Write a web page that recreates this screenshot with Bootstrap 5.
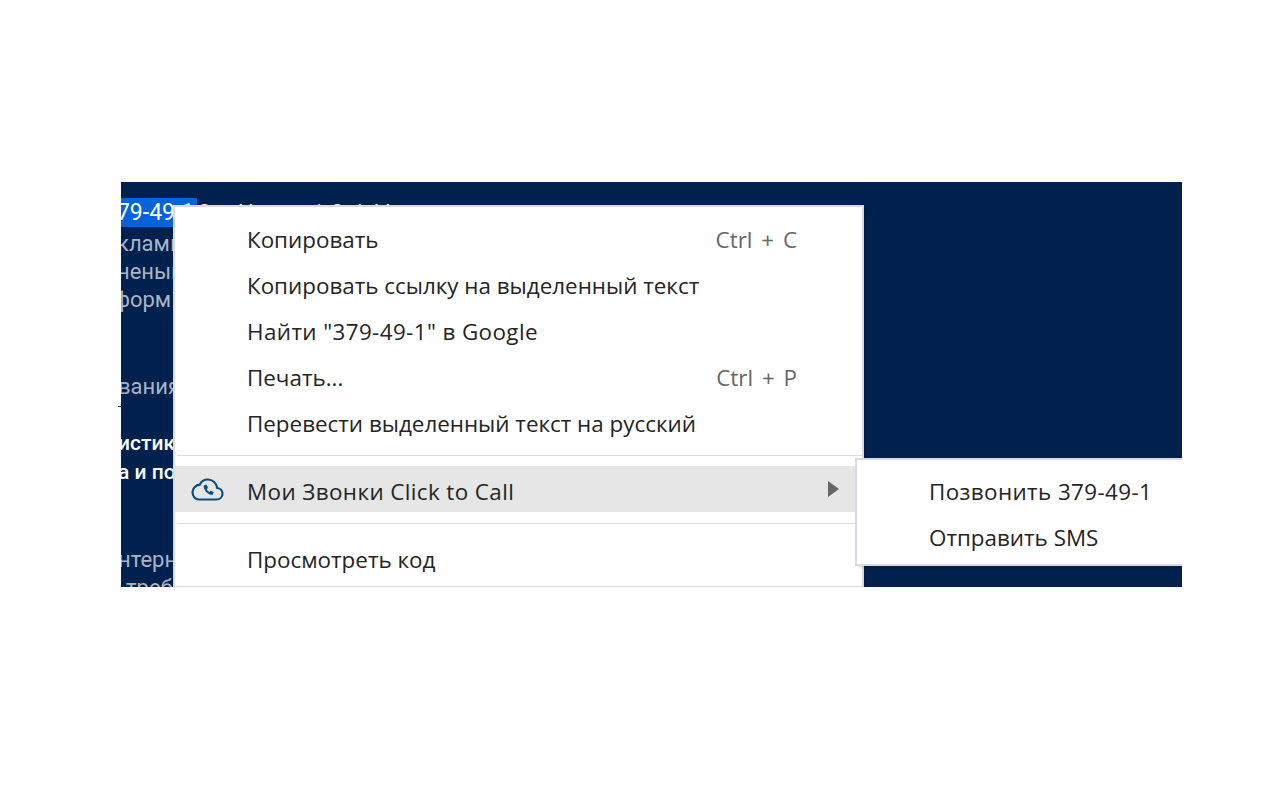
<!DOCTYPE html>
<html lang="en">
<head>
<meta charset="UTF-8">
<title>Мои Звонки Click to Call</title>
<link href="https://cdn.jsdelivr.net/npm/bootstrap@5.3.0/dist/css/bootstrap.min.css" rel="stylesheet">
<style>
  body { background: #fff; overflow: hidden; }
  .stage { width: 1061px; height: 405px; margin: 182px 0 0 121px; background: #00214d; overflow: hidden; position: relative; font-family: Roboto, sans-serif; font-size: 22px; color: #a9b4c6; }
  .bg-line { position: absolute; white-space: nowrap; line-height: 29px; }
  .bg-white-line { color: #fff; font-weight: 500; font-size: 21px; }
  .sel { background: #0563d9; color: #fff; font-size: 23px; padding: 1px 3px 1px 0; }
  .sel-rest { color: #fff; margin-left: 1px; }
  .ctx { position: absolute; background: #fff; font-family: "Open Sans", sans-serif; font-size: 22.4px; color: #242424; white-space: nowrap; box-shadow: 0 0 0 2px #d9dbe0, 2px 2px 4px rgba(0,0,0,.35); }
  .ctx-main { left: 54px; top: 25px; width: 687px; height: 379px; padding-top: 10px; }
  .ctx-sub { left: 736px; top: 278px; width: 340px; height: 104px; padding-top: 9px; }
  .ctx-row { height: 46px; padding: 0 65px 0 72px; }
  .ctx-on { background: #e6e6e6; }
  .ctx-low { position: relative; top: 3px; }
  .ctx-key { color: #666; word-spacing: 3px; }
  .ctx-wide { letter-spacing: .4px; }
  .ctx-sep { height: 1px; background: #dcdcdc; margin: 8px 0 10px 2px; }
  .ctx-sep2 { height: 1px; background: #dcdcdc; margin: 11px 0 13px 2px; }
  .ctx-ico { position: absolute; left: 16px; }
  .ctx-arrow { position: absolute; right: 23px; width: 0; height: 0; border-left: 11px solid #666; border-top: 8px solid transparent; border-bottom: 8px solid transparent; }
  .edge-tick { position: absolute; left: 118px; top: 406px; width: 3px; height: 1px; background: #222; }
</style>
</head>
<body>
  <div class="edge-tick"></div>
  <div class="stage">
    <div class="bg-line" style="top:16px;left:-17px"><span class="sel">379-49-1</span><span class="sel-rest">8 &nbsp; &nbsp; Номер 1 Quick!</span></div>
    <div class="bg-line" style="top:47px;left:-4px">кламы</div>
    <div class="bg-line" style="top:75px;left:-4px">ненып</div>
    <div class="bg-line" style="top:103px;left:-7px">форм</div>
    <div class="bg-line" style="top:190px;left:-3px">вания</div>
    <div class="bg-line bg-white-line" style="top:247px;left:-3px">истика</div>
    <div class="bg-line bg-white-line" style="top:276px;left:-3px">а и пол</div>
    <div class="bg-line" style="top:363px;left:-3px">нтерн</div>
    <div class="bg-line" style="top:391px;left:5px">треб</div>

    <div class="ctx ctx-main">
      <div class="ctx-row d-flex align-items-center justify-content-between"><span>Копировать</span><span class="ctx-key">Ctrl + C</span></div>
      <div class="ctx-row d-flex align-items-center"><span>Копировать ссылку на выделенный текст</span></div>
      <div class="ctx-row d-flex align-items-center"><span class="ctx-wide">Найти "379-49-1" в Google</span></div>
      <div class="ctx-row d-flex align-items-center justify-content-between"><span>Печать...</span><span class="ctx-key">Ctrl + P</span></div>
      <div class="ctx-row d-flex align-items-center"><span>Перевести выделенный текст на русский</span></div>
      <div class="ctx-sep"></div>
      <div class="ctx-row ctx-on d-flex align-items-center">
        <svg class="ctx-ico" width="33" height="23" viewBox="0 0 33 23" fill="none"><path d="M8 21.500h17.500c3.500 0 6-2.600 6-5.800 0-3-2.300-5.500-5.300-5.700C25.200 5 21.500 1.500 16.800 1.500c-3.700 0-6.700 2-8 5.200C4.500 7 1.500 10.500 1.500 14.300c0 4 3 7.200 6.500 7.200z" stroke="#0f4c7c" stroke-width="2.200"/><path d="M12.800 7.400l2.700-.9 1.600 3.400-1.500 1.200c.6 1.300 1.500 2.200 2.700 2.800l1.400-1.400 3 1.800-1 2.500c-4.900.3-9.600-5.400-8.900-9.400z" fill="#0f4c7c"/></svg>
        <span class="ctx-wide ctx-low">Мои Звонки Click to Call</span>
        <span class="ctx-arrow"></span>
      </div>
      <div class="ctx-sep2"></div>
      <div class="ctx-row d-flex align-items-center"><span>Просмотреть код</span></div>
    </div>

    <div class="ctx ctx-sub">
      <div class="ctx-row d-flex align-items-center"><span class="ctx-wide">Позвонить 379-49-1</span></div>
      <div class="ctx-row d-flex align-items-center"><span>Отправить SMS</span></div>
    </div>
  </div>
</body>
</html>
